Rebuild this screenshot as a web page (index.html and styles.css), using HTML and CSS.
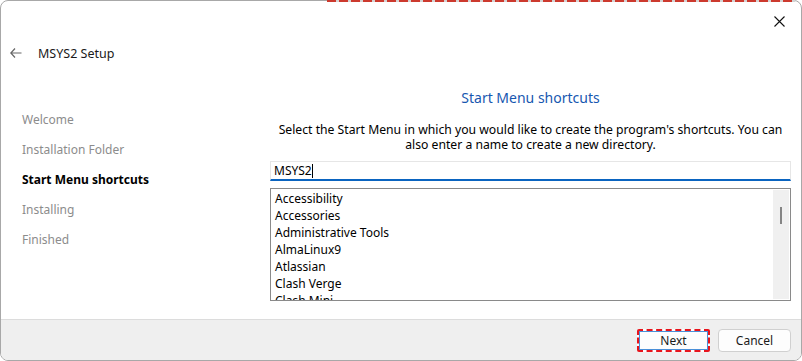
FILE: index.html
```html
<!DOCTYPE html>
<html lang="en">
<head>
    <meta charset="UTF-8">
    <title>MSYS2 Setup</title>
    <link rel="stylesheet" href="styles.css">
</head>
<body>
    <div class="window">
        <div class="topbar">
            <span class="close">
                <svg width="11" height="11" viewBox="0 0 11 11"><path d="M0.5 0.5 L10.5 10.5 M10.5 0.5 L0.5 10.5" stroke="#111" stroke-width="1.1" fill="none"/></svg>
            </span>
        </div>
        <div class="titlebar">
            <svg class="back" width="12" height="10" viewBox="0 0 12 10"><path d="M5 0.5 L0.8 5 L5 9.5 M0.8 5 H11.5" stroke="#666" stroke-width="1.2" fill="none"/></svg>
            <span class="title">MSYS2 Setup</span>
        </div>
        <div class="main">
            <ul class="steps">
                <li>Welcome</li>
                <li>Installation Folder</li>
                <li class="current">Start Menu shortcuts</li>
                <li>Installing</li>
                <li>Finished</li>
            </ul>
            <div class="page">
                <h2>Start Menu shortcuts</h2>
                <p class="desc">Select the Start Menu in which you would like to create the program's shortcuts. You can also enter a name to create a new directory.</p>
                <div class="input">MSYS2<span class="caret"></span></div>
                <div class="list">
                    <ul class="items">
                        <li>Accessibility</li>
                        <li>Accessories</li>
                        <li>Administrative Tools</li>
                        <li>AlmaLinux9</li>
                        <li>Atlassian</li>
                        <li>Clash Verge</li>
                        <li>Clash Mini</li>
                    </ul>
                    <div class="scroll"><span class="thumb"></span></div>
                </div>
            </div>
        </div>
        <div class="footer">
            <button class="btn next">Next</button>
            <button class="btn">Cancel</button>
        </div>
    </div>
    <div class="focus-edge"></div>
</body>
</html>
```

FILE: styles.css
```css
body {
    margin: 0;
    background: #fff;
    font-family: "Noto Sans", "Open Sans", sans-serif;
    color: #000;
}

.window {
    width: 800px;
    height: 359px;
    border: 1px solid #a8a8a8;
    border-radius: 8px;
    display: flex;
    flex-direction: column;
    overflow: hidden;
    background: #fff;
}

/* leftover focus rectangle along the top edge */
.focus-edge {
    position: absolute;
    top: 0;
    left: 327px;
    width: 468px;
    height: 2px;
    background: repeating-linear-gradient(90deg, #cc3a2e 0 9px, #d4d4d4 9px 12px);
}

.topbar {
    height: 30px;
    display: flex;
    justify-content: flex-end;
}

.close {
    width: 11px;
    height: 11px;
    margin: 9px 16px 0 0;
}

.titlebar {
    height: 44px;
    display: flex;
    align-items: center;
    padding-left: 9px;
}

.back {
    margin-right: 16px;
}

.title {
    font-size: 12.5px;
    color: #1a1a1a;
}

.main {
    flex: 1;
    display: flex;
}

.steps {
    list-style: none;
    margin: 0;
    padding: 36px 0 0 21px;
    width: 248px;
}

.steps li {
    height: 30px;
    font-size: 12px;
    line-height: 18px;
    color: #8c8c8c;
}

.steps li.current {
    color: #000;
    font-weight: bold;
}

.page {
    width: 521px;
    display: flex;
    flex-direction: column;
}

.page h2 {
    margin: 13px 0 0;
    font-size: 14px;
    font-weight: normal;
    color: #1757b0;
    text-align: center;
    line-height: 20px;
}

.desc {
    margin: 14px 0 0;
    font-size: 12.2px;
    line-height: 15px;
    text-align: center;
}

.input {
    margin-top: 9px;
    height: 17px;
    border: 1px solid #e6e6e6;
    border-bottom: 2px solid #0a64c0;
    padding-left: 3px;
    font-size: 12px;
    line-height: 17px;
    display: flex;
    align-items: center;
}

.caret {
    width: 1px;
    height: 14px;
    background: #000;
}

.list {
    margin-top: 7px;
    height: 111px;
    border: 1px solid #8a8a8a;
    display: flex;
    overflow: hidden;
}

.items {
    list-style: none;
    margin: 0;
    padding: 1px 0 0 4px;
    flex: 1;
}

.items li {
    height: 17px;
    font-size: 12px;
    line-height: 17px;
}

.scroll {
    width: 16px;
    margin: 1px 1px 1px 0;
    background: #f0f0f0;
    position: relative;
}

.thumb {
    position: absolute;
    left: 7px;
    top: 17px;
    width: 2px;
    height: 17px;
    background: #858585;
}

.footer {
    height: 40px;
    background: #efefef;
    border-top: 1px solid #dcdcdc;
    display: flex;
    justify-content: flex-end;
    align-items: center;
    gap: 8px;
    padding-right: 10px;
}

.btn {
    width: 73px;
    height: 23px;
    font-family: inherit;
    font-size: 12px;
    background: #fdfdfd;
    border: 1px solid #d0d0d0;
    border-radius: 4px;
    color: #1a1a1a;
    padding: 0;
}

.btn.next {
    border: 2px dashed #e8141c;
    border-radius: 2px;
    outline: 1px solid #4a90d9;
    outline-offset: -3px;
}
```
